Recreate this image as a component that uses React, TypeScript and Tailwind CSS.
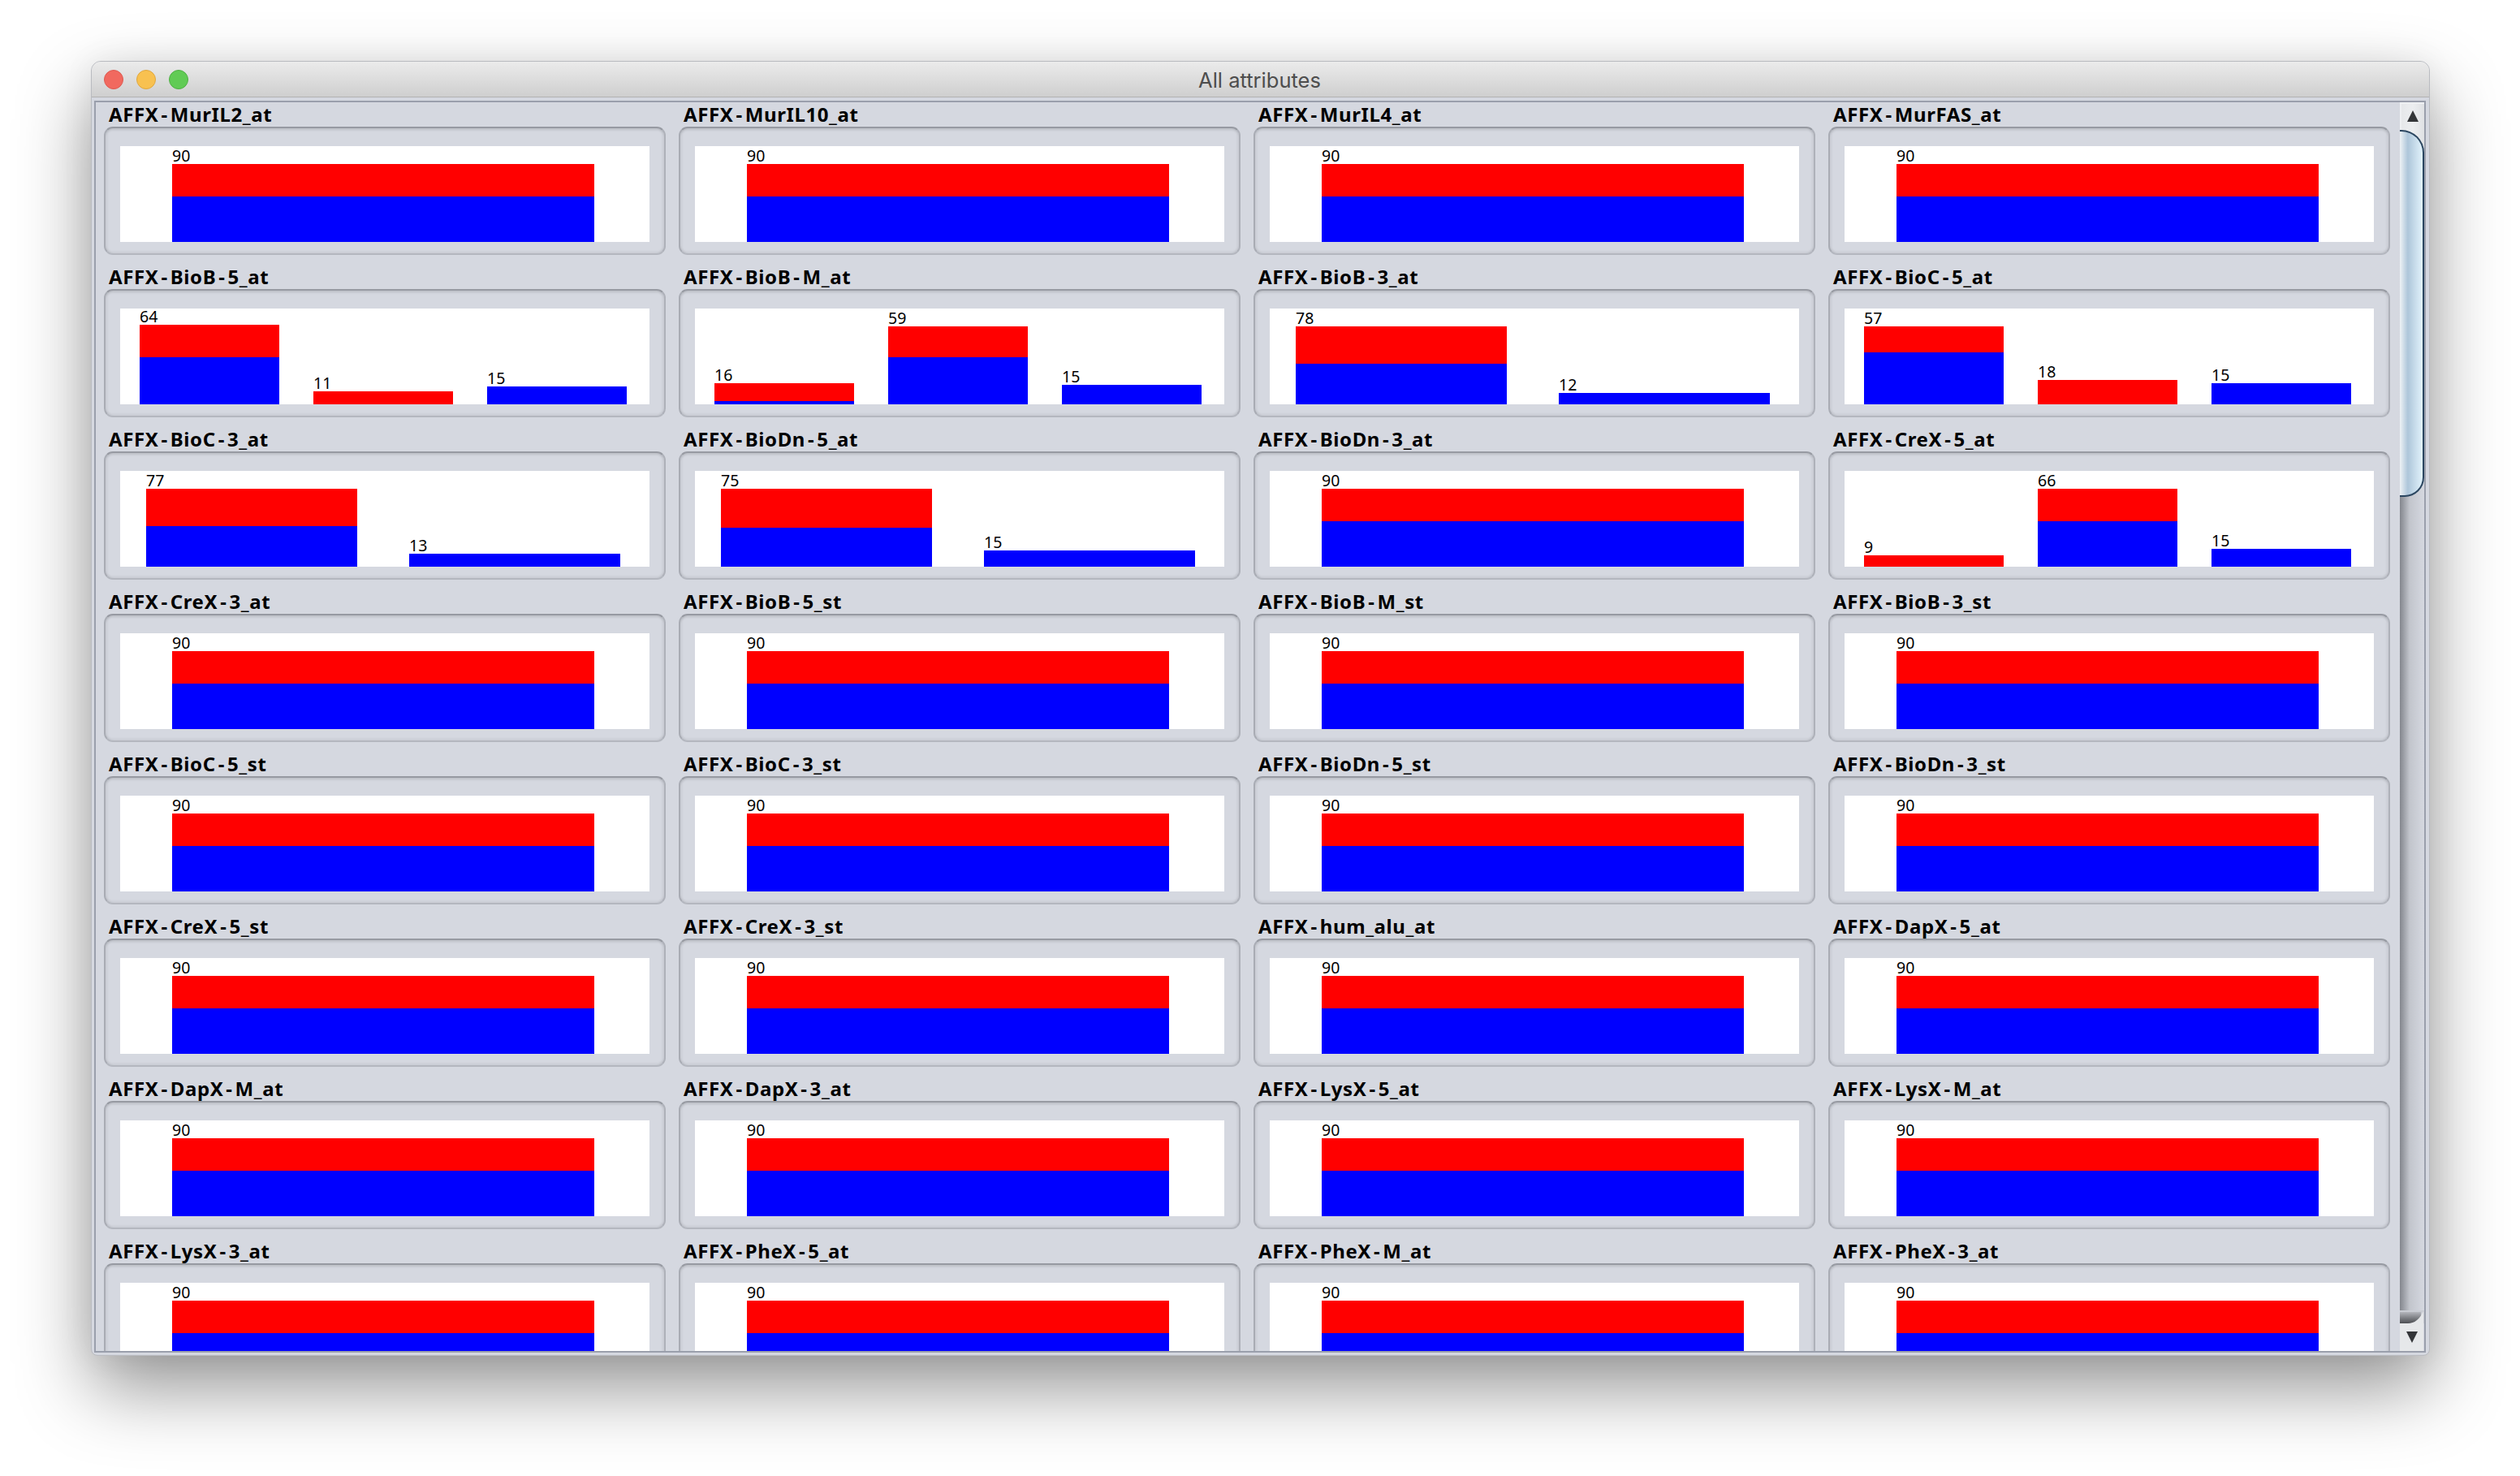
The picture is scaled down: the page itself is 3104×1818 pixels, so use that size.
import React from "react";

type Bar = { value: number; red: number; blue: number };
type Attr = { name: string; bars?: Bar[] };

const full: Bar[] = [{ value: 90, red: 40, blue: 56 }];

const attrs: Attr[] = [
  { name: "AFFX-MurIL2_at" },
  { name: "AFFX-MurIL10_at" },
  { name: "AFFX-MurIL4_at" },
  { name: "AFFX-MurFAS_at" },
  {
    name: "AFFX-BioB-5_at",
    bars: [
      { value: 64, red: 40, blue: 58 },
      { value: 11, red: 16, blue: 0 },
      { value: 15, red: 0, blue: 22 },
    ],
  },
  {
    name: "AFFX-BioB-M_at",
    bars: [
      { value: 16, red: 22, blue: 4 },
      { value: 59, red: 38, blue: 58 },
      { value: 15, red: 0, blue: 24 },
    ],
  },
  {
    name: "AFFX-BioB-3_at",
    bars: [
      { value: 78, red: 46, blue: 50 },
      { value: 12, red: 0, blue: 14 },
    ],
  },
  {
    name: "AFFX-BioC-5_at",
    bars: [
      { value: 57, red: 32, blue: 64 },
      { value: 18, red: 30, blue: 0 },
      { value: 15, red: 0, blue: 26 },
    ],
  },
  {
    name: "AFFX-BioC-3_at",
    bars: [
      { value: 77, red: 46, blue: 50 },
      { value: 13, red: 0, blue: 16 },
    ],
  },
  {
    name: "AFFX-BioDn-5_at",
    bars: [
      { value: 75, red: 48, blue: 48 },
      { value: 15, red: 0, blue: 20 },
    ],
  },
  { name: "AFFX-BioDn-3_at" },
  {
    name: "AFFX-CreX-5_at",
    bars: [
      { value: 9, red: 14, blue: 0 },
      { value: 66, red: 40, blue: 56 },
      { value: 15, red: 0, blue: 22 },
    ],
  },
  { name: "AFFX-CreX-3_at" },
  { name: "AFFX-BioB-5_st" },
  { name: "AFFX-BioB-M_st" },
  { name: "AFFX-BioB-3_st" },
  { name: "AFFX-BioC-5_st" },
  { name: "AFFX-BioC-3_st" },
  { name: "AFFX-BioDn-5_st" },
  { name: "AFFX-BioDn-3_st" },
  { name: "AFFX-CreX-5_st" },
  { name: "AFFX-CreX-3_st" },
  { name: "AFFX-hum_alu_at" },
  { name: "AFFX-DapX-5_at" },
  { name: "AFFX-DapX-M_at" },
  { name: "AFFX-DapX-3_at" },
  { name: "AFFX-LysX-5_at" },
  { name: "AFFX-LysX-M_at" },
  { name: "AFFX-LysX-3_at" },
  { name: "AFFX-PheX-5_at" },
  { name: "AFFX-PheX-M_at" },
  { name: "AFFX-PheX-3_at" },
];

const plotLayout: Record<number, string> = {
  1: "pl-[64px]",
  2: "pl-[32px] gap-[64px]",
  3: "pl-[24px] gap-[42px]",
};

const barWidth: Record<number, string> = {
  1: "w-[520px]",
  2: "w-[260px]",
  3: "w-[172px]",
};

function Chart({ bars }: { bars: Bar[] }) {
  return (
    <div className={`flex h-[118px] items-end bg-white ${plotLayout[bars.length]}`}>
      {bars.map((bar, i) => (
        <div key={i} className={`flex flex-col ${barWidth[bars.length]}`}>
          <span className="h-[22px] text-[19.5px] leading-[24px] text-black">
            {bar.value}
          </span>
          <div className="bg-[#ff0000]" style={{ height: bar.red }} />
          <div className="bg-[#0000ff]" style={{ height: bar.blue }} />
        </div>
      ))}
    </div>
  );
}

// the hyphens are longer in the original font, so give them some air
function AttrName({ name }: { name: string }) {
  const parts = name.split("-");
  return (
    <>
      {parts.map((part, i) => (
        <React.Fragment key={i}>
          {i > 0 && <span className="px-[3px]">-</span>}
          {part}
        </React.Fragment>
      ))}
    </>
  );
}

function AttrCell({ attr }: { attr: Attr }) {
  return (
    <div className="flex flex-col">
      <div className="h-[30px] pl-[6px] text-[24px] leading-[30px] font-bold tracking-[0.6px] text-black">
        <AttrName name={attr.name} />
      </div>
      <div className="h-[158px] rounded-[11px] border-2 border-t-[#979aa2] border-r-[#aeb1b9] border-b-[#b4b7bf] border-l-[#a9acb4] bg-[#d5d8e0] pt-[22px] pr-[18px] pl-[18px] shadow-[inset_0_4px_3px_-2px_rgba(0,0,0,0.12),inset_4px_0_3px_-2px_rgba(0,0,0,0.06),inset_-4px_0_3px_-2px_rgba(0,0,0,0.06),inset_0_-4px_3px_-2px_rgba(0,0,0,0.06)]">
        <Chart bars={attr.bars ?? full} />
      </div>
    </div>
  );
}

function Scrollbar() {
  return (
    <div className="flex h-full w-[30px] shrink-0 flex-col">
      <div className="flex h-[64px] justify-center border-t-2 border-l-2 border-t-[#eef0f2] border-l-[#eef0f2] bg-gradient-to-r from-[#e6e8ea] via-[#eceef0] to-[#dfe1e4] pt-[8px]">
        <svg width="14" height="14" viewBox="0 0 14 14">
          <path d="M7 0 L14 14 L0 14 Z" fill="#333538" />
        </svg>
      </div>
      <div className="relative z-10 -mt-[30px] -mb-[30px] h-[452px] shrink-0 rounded-r-[28px] rounded-br-[24px] border-t-2 border-r-2 border-b-2 border-[#2b4660] bg-gradient-to-r from-[#eef2f5] via-[#aec6da] via-35% to-[#e2f3fc]" />
      <div className="flex-1 bg-gradient-to-r from-[#84878e] via-[#c2c5cc] via-40% to-[#d5d8e0]" />
      <svg width="30" height="50" viewBox="0 0 30 50" className="block shrink-0">
        <defs>
          <linearGradient id="capShade" x1="0" y1="0" x2="0" y2="1">
            <stop offset="0" stopColor="#b4b6bc" />
            <stop offset="1" stopColor="#4c4e52" />
          </linearGradient>
        </defs>
        <rect width="30" height="16" fill="#c9ccd3" />
        <path d="M0 2 H26 V10 Q22 16 12 16 H0 Z" fill="url(#capShade)" />
        <path d="M0 16 H10 Q22 16 29 1 V50 H0 Z" fill="#e6e8ea" />
        <path d="M8 26 H22 L15 40 Z" fill="#333538" />
      </svg>
    </div>
  );
}

export default function App() {
  return (
    <div className="h-[1818px] w-[3104px] overflow-hidden bg-white pt-[75px] pl-[112px] font-['Noto_Sans',sans-serif]">
      <div className="h-[1595px] w-[2881px] rounded-t-[12px] rounded-b-[8px] border border-[#b9bbc0] bg-[#d5d8e0] shadow-[0_40px_90px_rgba(0,0,0,0.42),0_0_40px_rgba(0,0,0,0.06)]">
        <div className="relative flex h-[44px] items-center justify-center rounded-t-[11px] border-b border-[#b2b2b2] bg-gradient-to-b from-[#ebebeb] to-[#cfcfcf] pt-[2px] pr-[2px]">
          <div className="absolute top-[10px] left-[15px] flex gap-[16px]">
            <span className="h-[24px] w-[24px] rounded-full border border-[#de5a50] bg-[#f1695f]" />
            <span className="h-[24px] w-[24px] rounded-full border border-[#e0a73e] bg-[#f8c150]" />
            <span className="h-[24px] w-[24px] rounded-full border border-[#4fb044] bg-[#61cb55]" />
          </div>
          <span className="font-['Inter',sans-serif] text-[25.5px] leading-none text-[#4d4d4d]">
            All attributes
          </span>
        </div>
        <div className="pt-[4px] pr-[4px] pb-[3px] pl-[3px]">
          <div className="flex h-[1542px] overflow-hidden border-2 border-[#9a9fac]">
            <div className="min-w-0 flex-1 overflow-hidden pl-[10px]">
              <div className="grid w-[2816px] grid-cols-[repeat(4,692px)] gap-x-[16px] gap-y-[12px]">
                {attrs.map((attr) => (
                  <AttrCell key={attr.name} attr={attr} />
                ))}
              </div>
            </div>
            <Scrollbar />
          </div>
        </div>
      </div>
    </div>
  );
}
